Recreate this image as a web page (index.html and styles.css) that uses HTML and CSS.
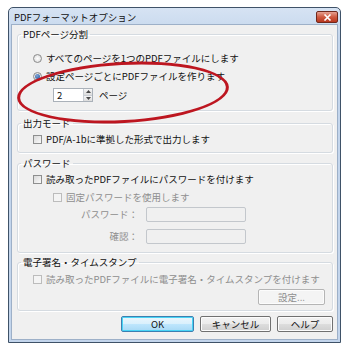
FILE: index.html
```html
<!DOCTYPE html>
<html lang="ja">
<head>
    <meta charset="UTF-8">
    <meta name="viewport" content="width=device-width, initial-scale=1.0">
    <title>PDFフォーマットオプション</title>
    <link rel="stylesheet" href="styles.css">
</head>
<body>
    <div class="window">
        <div class="titlebar">
            <span class="title">PDFフォーマットオプション</span>
            <span class="close">
                <svg width="9" height="7" viewBox="0 0 9 7"><path d="M1.5 0.5 L7.5 6.5 M7.5 0.5 L1.5 6.5" stroke="#fff" stroke-width="1.6"/></svg>
            </span>
        </div>
        <div class="client">
            <fieldset class="group group-split">
                <legend>PDFページ分割</legend>
                <label class="opt"><span class="radio"></span>すべてのページを1つのPDFファイルにします</label>
                <label class="opt"><span class="radio checked"></span>設定ページごとにPDFファイルを作ります</label>
                <div class="spin-row">
                    <div class="spin">
                        <span class="spin-value">2</span>
                        <span class="spin-btns">
                            <span class="spin-btn"><svg width="5" height="3" viewBox="0 0 5 3"><path d="M0 3 L2.5 0 L5 3Z" fill="#4a4a4a"/></svg></span>
                            <span class="spin-btn"><svg width="5" height="3" viewBox="0 0 5 3"><path d="M0 0 L2.5 3 L5 0Z" fill="#4a4a4a"/></svg></span>
                        </span>
                    </div>
                    <span>ページ</span>
                </div>
            </fieldset>

            <fieldset class="group group-mode">
                <legend>出力モード</legend>
                <label class="opt"><span class="check"></span>PDF/A-1bに準拠した形式で出力します</label>
            </fieldset>

            <fieldset class="group group-pass">
                <legend>パスワード</legend>
                <label class="opt"><span class="check"></span>読み取ったPDFファイルにパスワードを付けます</label>
                <label class="opt sub disabled"><span class="check"></span>固定パスワードを使用します</label>
                <div class="field disabled">
                    <span class="field-label">パスワード：</span>
                    <span class="input"></span>
                </div>
                <div class="field disabled">
                    <span class="field-label">確認：</span>
                    <span class="input"></span>
                </div>
            </fieldset>

            <fieldset class="group group-sign">
                <legend>電子署名・タイムスタンプ</legend>
                <label class="opt disabled"><span class="check"></span>読み取ったPDFファイルに電子署名・タイムスタンプを付けます</label>
                <div class="sign-actions">
                    <span class="btn btn-disabled">設定...</span>
                </div>
            </fieldset>

            <div class="actions">
                <span class="btn btn-default">OK</span>
                <span class="btn btn-cancel">キャンセル</span>
                <span class="btn btn-help">ヘルプ</span>
            </div>

            <div class="highlight"></div>
        </div>
    </div>
</body>
</html>
```

FILE: styles.css
```css
html {
  box-sizing: border-box;
  font-family: "Noto Sans CJK JP", "Noto Sans", sans-serif;
  font-size: 9.5px;
}

*,
*:before,
*:after {
  box-sizing: inherit;
}

body {
  margin: 0;
  background-color: white;
  color: #111;
}

.window {
  margin: 7px 0 0 8px;
  width: 333px;
  height: 336px;
  display: flex;
  flex-direction: column;
  border: 1px solid #3f5268;
  border-radius: 5px 5px 0 0;
  background: linear-gradient(#d6e3f3, #c3d5ec 30px, #c3d5ec);
  padding: 0 2px 2px;
}

.titlebar {
  height: 16px;
  display: flex;
  align-items: center;
  justify-content: space-between;
  padding-left: 3px;
}
.title {
  color: #111;
  font-size: 9.5px;
  margin-top: 1px;
}
.close {
  width: 22px;
  height: 12px;
  display: flex;
  align-items: center;
  justify-content: center;
  border: 1px solid #70281c;
  border-radius: 2px;
  background: linear-gradient(#e6a192, #cf5a40 50%, #b8371f);
  margin-top: 2px;
}

.client {
  position: relative;
  flex: 1;
  background-color: #f0f0f0;
  border: 1px solid #9db0c8;
  padding: 3px 4px 0 5px;
}

.group {
  margin: 0;
  padding: 0;
  border: 1px solid #d5dbe1;
  border-radius: 3px;
  box-shadow: inset 1px 1px 0 #fff, 1px 1px 0 #fff;
}
.group legend {
  margin-left: 3px;
  padding: 0 2px;
  line-height: 12px;
  color: #111;
}

.opt {
  display: flex;
  align-items: center;
  gap: 4px;
  height: 18px;
  margin-left: 15px;
}
.opt.sub {
  margin-left: 35px;
}
.disabled {
  color: #8e8e8e;
}

.radio {
  width: 9px;
  height: 9px;
  border-radius: 50%;
  border: 1px solid #8b8b8b;
  background: radial-gradient(#fff, #d8d8d8);
  display: flex;
  align-items: center;
  justify-content: center;
}
.radio.checked:after {
  content: "";
  width: 5px;
  height: 5px;
  border-radius: 50%;
  background: radial-gradient(circle at 40% 35%, #7fa6d8, #1f4f96);
}

.check {
  width: 9px;
  height: 9px;
  border: 1px solid #8e8f8f;
  background: linear-gradient(135deg, #d9d9d9, #fafafa);
}
.disabled .check {
  border-color: #bcbcbc;
  background: #f4f4f4;
}

.group-split .opt:first-of-type {
  margin-top: 9px;
}
.spin-row {
  display: flex;
  align-items: center;
  gap: 6px;
  margin: 3px 0 8px 35px;
}
.spin {
  display: flex;
  height: 14px;
  border: 1px solid #aab1b9;
  background-color: white;
}
.spin-value {
  width: 29px;
  padding-left: 3px;
  line-height: 12px;
}
.spin-btns {
  display: flex;
  flex-direction: column;
  width: 9px;
  border-left: 1px solid #c9ced4;
}
.spin-btn {
  flex: 1;
  display: flex;
  align-items: center;
  justify-content: center;
  background: linear-gradient(#f6f6f6, #dcdcdc);
  border-bottom: 1px solid #c9ced4;
}
.spin-btn:last-child {
  border-bottom: none;
}

.group-mode {
  margin-top: 6px;
}
.group-mode .opt {
  margin-top: 1px;
  margin-bottom: 4px;
}

.group-pass {
  margin-top: 4px;
}
.group-pass .opt:first-of-type {
  margin-top: 1px;
}
.field {
  display: flex;
  align-items: center;
  height: 22px;
}
.field:first-of-type {
  margin-top: -3px;
}
.field + .field {
  margin-bottom: 5px;
}
.field-label {
  width: 120px;
  text-align: right;
}
.input {
  margin-left: 8px;
  width: 100px;
  height: 15px;
  border: 1px solid #c3c7cc;
  border-radius: 2px;
  background-color: #f0f0f0;
}

.group-sign {
  margin-top: 3px;
}
.group-sign .opt {
  margin-top: 2px;
}
.sign-actions {
  display: flex;
  justify-content: flex-end;
  padding: 1px 7px 5px 0;
}

.btn {
  display: flex;
  align-items: center;
  justify-content: center;
  height: 16px;
  border: 1px solid #707070;
  border-radius: 2px;
  background: linear-gradient(#f2f2f2, #ebebeb 50%, #dddddd 51%, #cfcfcf);
  box-shadow: inset 0 0 0 1px #fcfcfc;
  color: #111;
}
.btn-disabled {
  width: 67px;
  color: #8e8e8e;
  border-color: #b5b5b5;
  background: #f4f4f4;
}
.btn-default {
  width: 73px;
  border-color: #3c7fb1;
  background: linear-gradient(#eaf6fd, #d9f0fc 50%, #bee6fd 51%, #a7d9f5);
  box-shadow: inset 0 0 0 1px #48d4f5;
}
.btn-cancel {
  width: 71px;
}
.btn-help {
  width: 56px;
}
.actions {
  display: flex;
  justify-content: flex-end;
  gap: 6px;
  margin-top: 5px;
  padding-right: 0;
}

.highlight {
  position: absolute;
  left: 5px;
  top: 37px;
  width: 212px;
  height: 61px;
  border: 3px solid #bd1620;
  border-radius: 50%;
  transform: rotate(-3deg);
  pointer-events: none;
}
```
